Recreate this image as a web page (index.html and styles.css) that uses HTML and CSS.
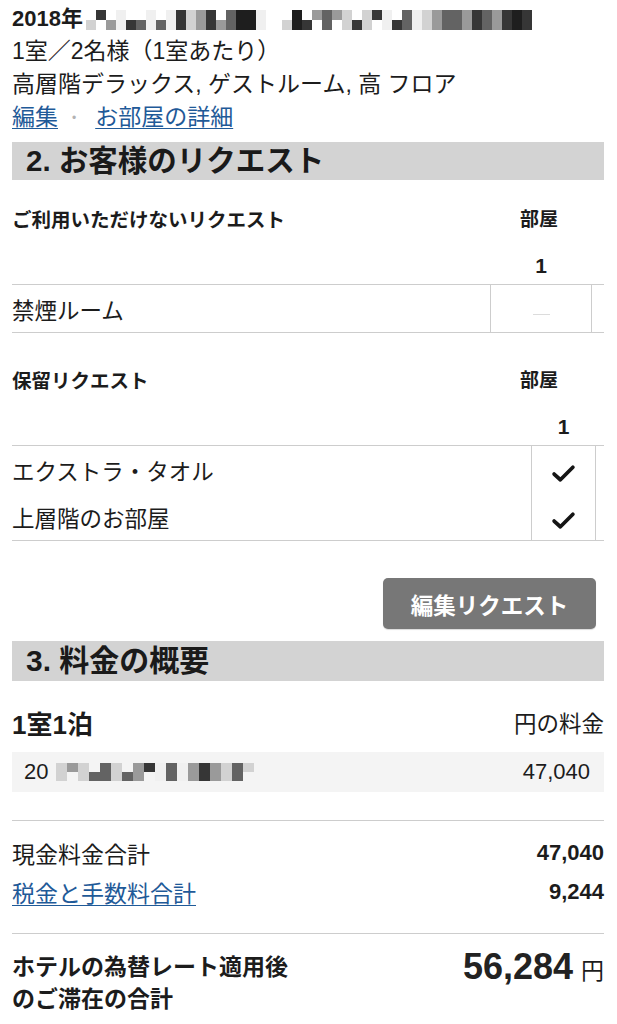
FILE: index.html
```html
<!DOCTYPE html>
<html lang="ja">
<head>
<meta charset="utf-8">
<title>予約内容</title>
<link rel="stylesheet" href="styles.css">
</head>
<body>
<div class="page">
  <div class="stay">
    <div class="line line-date">2018年<span class="mosaic m-top"><i class="s1 b"></i><i class="s4 t"></i><i class="s2 b"></i><i class="s0"></i><i class="s4 b"></i><i class="s3 b"></i><i class="s0"></i><i class="s3 b"></i><i class="s0"></i><i class="s4"></i><i class="s1"></i><i class="s2"></i><i class="s4"></i><i class="s2 b"></i><i class="s3"></i><i class="s5"></i><i class="s5"></i><i class="s0"></i></span><span class="mosaic m-top m-gap"><i class="s1 b"></i><i class="s5"></i><i class="s4 b"></i><i class="s2 t"></i><i class="s3"></i><i class="s2 t"></i><i class="s1"></i><i class="s4 b"></i><i class="s1"></i><i class="s4 t"></i><i class="s0"></i><i class="s4 b"></i><i class="s3"></i><i class="s0"></i><i class="s1"></i><i class="s2"></i><i class="s3"></i><i class="s3"></i><i class="s2"></i><i class="s4"></i><i class="s3"></i><i class="s2"></i><i class="s4"></i><i class="s5"></i><i class="s4"></i></span></div>
    <div class="line">1室／2名様（1室あたり）</div>
    <div class="line">高層階デラックス, ゲストルーム, 高 フロア</div>
    <div class="line"><a href="#" class="link">編集</a><span class="sep">•</span><a href="#" class="link">お部屋の詳細</a></div>
  </div>

  <h2 class="bar">2. お客様のリクエスト</h2>

  <section class="req req-a">
    <div class="req-title"><span>ご利用いただけないリクエスト</span><span class="room">部屋</span></div>
    <div class="req-row num-row"><span></span><span class="cell num">1</span><span></span></div>
    <div class="req-body">
      <div class="req-row item"><span class="label">禁煙ルーム</span><span class="cell mid"><span class="dash"></span></span><span></span></div>
    </div>
  </section>

  <section class="req req-b">
    <div class="req-title"><span>保留リクエスト</span><span class="room">部屋</span></div>
    <div class="req-row num-row"><span></span><span class="cell num">1</span><span></span></div>
    <div class="req-body">
      <div class="req-row item"><span class="label">エクストラ・タオル</span><span class="cell mid"><svg class="check" viewBox="0 0 24 18"><path d="M3 9.5 L9 15 L21 3"/></svg></span><span></span></div>
      <div class="req-row item"><span class="label">上層階のお部屋</span><span class="cell mid"><svg class="check" viewBox="0 0 24 18"><path d="M3 9.5 L9 15 L21 3"/></svg></span><span></span></div>
    </div>
  </section>

  <div class="actions"><button class="btn">編集リクエスト</button></div>

  <h2 class="bar bar-price">3. 料金の概要</h2>

  <section class="price">
    <div class="price-head"><span class="nights">1室1泊</span><span class="unit">円の料金</span></div>
    <div class="night-row"><span class="date">20<span class="mosaic m-row"><i class="s1"></i><i class="s2 t"></i><i class="s1"></i><i class="s3 b"></i><i class="s3"></i><i class="s1"></i><i class="s3 b"></i><i class="s2"></i><i class="s4 t"></i><i class="s0"></i><i class="s3"></i><i class="s0"></i><i class="s2"></i><i class="s4"></i><i class="s2"></i><i class="s1"></i><i class="s3"></i><i class="s1 t"></i></span></span><span class="amt">47,040</span></div>
    <div class="rule"></div>
    <div class="tot-row"><span>現金料金合計</span><span class="val">47,040</span></div>
    <div class="tot-row"><a href="#" class="link">税金と手数料合計</a><span class="val">9,244</span></div>
    <div class="rule rule-2"></div>
    <div class="grand">
      <div class="grand-label">ホテルの為替レート適用後<br>のご滞在の合計</div>
      <div class="grand-amt"><span class="big">56,284</span><span class="yen">円</span></div>
    </div>
  </section>
</div>
</body>
</html>
```

FILE: styles.css
```css
* { box-sizing: border-box; }
body {
  margin: 0;
  background: #fff;
  color: #1c1c1c;
  font-family: "Liberation Sans", "Noto Sans CJK JP", sans-serif;
}
.page { padding: 2px 13px 0 12px; }

.stay .line {
  font-size: 23px;
  line-height: 33px;
  height: 33px;
  white-space: nowrap;
}
.stay .line-date {
  font-weight: bold;
  font-size: 22px;
}
.link { color: #1f5a98; text-decoration: underline; text-underline-offset: 3px; text-decoration-thickness: 1px; }
.sep { color: #b3b3b3; font-size: 12px; margin: 0 19px 0 14px; vertical-align: 3px; }

.mosaic { display: inline-flex; vertical-align: -4px; height: 20px; align-items: stretch; }
.mosaic i { display: block; width: 10px; height: 20px; }
.mosaic i.t { height: 10px; }
.mosaic i.b { height: 10px; margin-top: 10px; }
.m-top { margin-left: 3px; }
.m-gap { margin-left: 16px; }
.s0 { background: #f0f0f0; }
.s1 { background: #d2d2d2; }
.s2 { background: #9a9a9a; }
.s3 { background: #636363; }
.s4 { background: #363636; }
.s5 { background: #1e1e1e; }

.bar {
  margin: 8px 0 0;
  height: 38px;
  line-height: 38px;
  background: #d3d3d3;
  padding-left: 14px;
  font-size: 29.5px;
  font-weight: bold;
  color: #1a1a1a;
}

.req-title {
  display: flex;
  justify-content: space-between;
  font-weight: bold;
  font-size: 19.5px;
  line-height: 32px;
  height: 32px;
}
.req-a .req-title { margin-top: 24px; }
.req-b .req-title { margin-top: 32px; }
.req-title .room { margin-right: 46px; font-size: 19px; }

.req-row { display: grid; }
.req-a .req-row { grid-template-columns: 1fr 102px 12px; }
.req-b .req-row { grid-template-columns: 1fr 65px 8px; }
.num-row { margin-top: 14px; height: 34px; }
.num { text-align: center; font-weight: bold; font-size: 21px; line-height: 32px; }

.req-body { border-top: 1px solid #cdcdcd; border-bottom: 1px solid #cdcdcd; }
.req-a .item { height: 47px; }
.req-b .item { height: 47px; }
.item .label { font-size: 22.5px; line-height: 36px; padding-top: 9px; }
.mid {
  border-left: 1px solid #cdcdcd;
  border-right: 1px solid #cdcdcd;
  display: flex;
  align-items: center;
  justify-content: center;
}
.dash { display: block; width: 17px; height: 1px; background: #dcdcdc; margin-top: 11px; }
.check { width: 25px; height: 19px; margin-top: 8px; }
.check path { fill: none; stroke: #151515; stroke-width: 3.6; stroke-linecap: round; stroke-linejoin: round; }

.actions { display: flex; justify-content: flex-end; margin-top: 37px; padding-right: 8px; }
.btn {
  width: 213px;
  height: 51px;
  border: 0;
  border-radius: 5px;
  background: #777;
  color: #fff;
  font-family: inherit;
  font-weight: bold;
  font-size: 22.5px;
  box-shadow: 0 1px 1px rgba(0,0,0,0.15);
}
.bar-price { margin-top: 12px; font-size: 30px; height: 40px; line-height: 40px; }

.price-head {
  display: flex;
  justify-content: space-between;
  align-items: center;
  margin-top: 25px;
  height: 32px;
}
.nights { font-weight: bold; font-size: 26px; }
.unit { font-size: 22.5px; }

.night-row {
  margin-top: 14px;
  height: 40px;
  background: #f4f4f4;
  display: flex;
  justify-content: space-between;
  align-items: center;
  padding: 0 14px 0 12px;
  font-size: 22px;
}
.date { display: inline-flex; align-items: center; }
.m-row { height: 18px; margin-left: 8px; vertical-align: middle; }
.m-row i { width: 11px; height: 18px; }
.m-row i.t { height: 9px; }
.m-row i.b { height: 9px; margin-top: 9px; }

.rule { border-top: 1px solid #cdcdcd; margin-top: 28px; }
.rule-2 { margin-top: 22px; }
.tot-row {
  display: flex;
  justify-content: space-between;
  align-items: center;
  height: 39px;
  font-size: 23px;
}
.rule + .tot-row { margin-top: 12px; }
.tot-row .val { font-weight: bold; font-size: 22px; }

.grand {
  display: flex;
  justify-content: space-between;
  align-items: flex-start;
  margin-top: 17px;
}
.grand-label { font-weight: bold; font-size: 23px; line-height: 32px; }
.grand-amt { display: flex; align-items: baseline; line-height: 32px; }
.big { font-weight: bold; font-size: 36px; color: #222; }
.yen { font-size: 23px; margin-left: 8px; }
```
